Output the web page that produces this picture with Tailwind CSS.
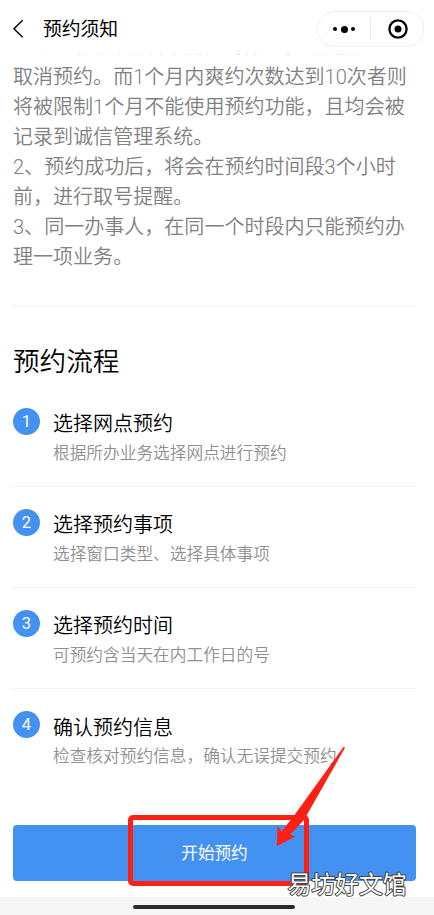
<!DOCTYPE html>
<html lang="zh-CN">
<head>
<meta charset="utf-8">
<title>预约须知</title>
<script src="https://cdn.jsdelivr.net/npm/@tailwindcss/browser@4"></script>
</head>
<body class="bg-white">
<div class="relative flex h-[915px] w-[434px] flex-col overflow-hidden bg-white font-[Roboto,'Noto_Sans_CJK_SC',sans-serif] whitespace-nowrap">
  <header class="flex h-[54px] shrink-0 items-start bg-white pt-[11px] pr-[10px] pl-[12px]">
    <svg class="mt-[8px] h-[20px] w-[12px]" viewBox="0 0 12 20" fill="none" stroke="#111" stroke-width="1.6"><path d="M10.6 1.2 2 9.7l8.6 8.5"/></svg>
    <h1 class="ml-[19px] text-[18.8px] leading-[39px] text-black">预约须知</h1>
    <div class="ml-auto flex h-[36px] w-[107px] items-center rounded-full border border-[#f0f0f0]">
      <div class="flex w-[52px] items-center justify-center gap-[3.5px]">
        <i class="size-[4px] rounded-full bg-black"></i>
        <i class="size-[7px] rounded-full bg-black"></i>
        <i class="size-[4px] rounded-full bg-black"></i>
      </div>
      <div class="h-[21px] w-px bg-[#e8e8e8]"></div>
      <svg class="ml-[17px] size-[20px]" viewBox="0 0 20 20"><circle cx="10" cy="10" r="8.6" fill="none" stroke="#000" stroke-width="2.3"/><circle cx="10" cy="10" r="3.5"/></svg>
    </div>
  </header>
  <main class="flex min-h-0 flex-1 flex-col overflow-hidden pr-[18px] pl-[13px] font-[350]">
    <p class="-mt-[22px] text-[20.05px] leading-[30px] text-[#808080]"><span class="relative -top-px text-[#bbb]">1、预约成功后若不能按时办理，请提前</span><br>取消预约。而1个月内爽约次数达到10次者则<br>将被限制1个月不能使用预约功能，且均会被<br>记录到诚信管理系统。<br>2、预约成功后，将会在预约时间段3个小时<br>前，进行取号提醒。<br>3、同一办事人，在同一个时段内只能预约办<br>理一项业务。</p>
    <hr class="mt-[33px] border-t-2 border-[#f6f6f6]">
    <h2 class="mt-[35px] text-[26.6px] leading-[40px] text-black">预约流程</h2>
    <ol>
      <li class="flex h-[105px] border-b border-[#f2f2f2] pt-[26px]">
        <span class="size-[27px] rounded-full bg-[#4392f1] text-center text-[16.5px] leading-[27px] font-normal text-white">1</span>
        <div class="ml-[13px] pt-px"><h3 class="text-[20px] leading-[30px] text-black">选择网点预约</h3><p class="text-[16.7px] leading-[29px] text-[#909090]">根据所办业务选择网点进行预约</p></div>
      </li>
      <li class="flex h-[101px] border-b border-[#f2f2f2] pt-[22px]">
        <span class="size-[27px] rounded-full bg-[#4392f1] text-center text-[16.5px] leading-[27px] font-normal text-white">2</span>
        <div class="ml-[13px] pt-px"><h3 class="text-[20px] leading-[30px] text-black">选择预约事项</h3><p class="text-[16.7px] leading-[29px] text-[#909090]">选择窗口类型、选择具体事项</p></div>
      </li>
      <li class="flex h-[101px] border-b border-[#f2f2f2] pt-[22px]">
        <span class="size-[27px] rounded-full bg-[#4392f1] text-center text-[16.5px] leading-[27px] font-normal text-white">3</span>
        <div class="ml-[13px] pt-px"><h3 class="text-[20px] leading-[30px] text-black">选择预约时间</h3><p class="text-[16.7px] leading-[29px] text-[#909090]">可预约含当天在内工作日的号</p></div>
      </li>
      <li class="flex h-[101px] pt-[22px]">
        <span class="size-[27px] rounded-full bg-[#4392f1] text-center text-[16.5px] leading-[27px] font-normal text-white">4</span>
        <div class="ml-[13px] pt-px"><h3 class="text-[20px] leading-[32px] text-black">确认预约信息</h3><p class="text-[16.7px] leading-[25px] text-[#909090]">检查核对预约信息，确认无误提交预约</p></div>
      </li>
    </ol>
    <button class="mt-[34.5px] h-[56px] shrink-0 rounded-[4px] bg-[#4392f1] pt-[3px] text-[16.6px] font-normal text-white">开始预约</button>
  </main>
  <footer class="flex h-[18px] shrink-0 justify-center bg-[#f6f6f6] pt-[8px] pr-[6px]">
    <div class="h-[4px] w-[162px] rounded-full bg-[#2b2b2d]"></div>
  </footer>
  <div class="absolute top-[815px] left-[128px] h-[71px] w-[181px] rounded-[5px] border-5 border-[#ff2015]"></div>
  <svg class="absolute top-[740px] left-[270px] h-[110px] w-[80px]" viewBox="270 740 80 110"><path fill="#ff2015" d="M343.6 746.8 345 747.8 304 820 290 834.8 295.2 836.4 276.8 846.2 277.6 825.6 281.5 831.8 294.5 815Z"/></svg>
  <svg class="absolute top-[865px] left-[280px] h-[36px] w-[140px]" viewBox="0 0 140 36"><text x="7.5" y="27.6" font-size="23.8" fill="#fff" stroke="#444" stroke-width="2" stroke-linejoin="round" paint-order="stroke">易坊好文馆</text></svg>
</div>
</body>
</html>
